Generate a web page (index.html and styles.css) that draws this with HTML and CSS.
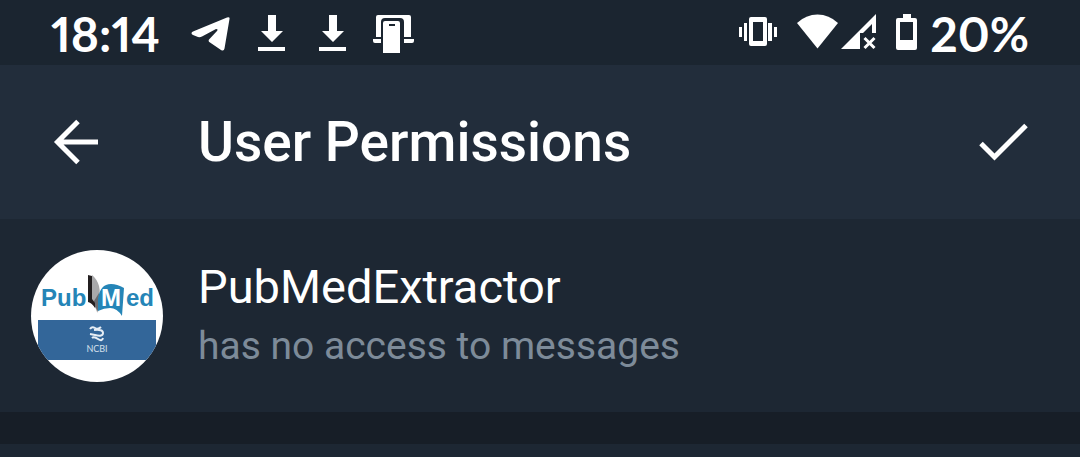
FILE: index.html
```html
<!DOCTYPE html>
<html lang="en">
<head>
<meta charset="utf-8">
<meta name="viewport" content="width=device-width, initial-scale=1">
<title>User Permissions</title>
<link rel="stylesheet" href="styles.css">
</head>
<body>
<div class="status">
  <div class="status-side status-left">
    <time class="status-text clock">18:14</time>
    <svg width="40" height="64" viewBox="191 0 40 64" aria-hidden="true"><path d="M193 31.500L227 17.500Q230 16.500 229.500 19L224.500 48.500Q224 51.500 221 50L210 42.500Q207.500 41 209.500 39L217 31Q218.500 29 216 29L202 36.500Q200 37.500 198 37L193 35Q190 33 193 31.500Z"/></svg>
    <svg width="41" height="64" viewBox="251 0 41 64" aria-hidden="true"><path d="M268 15h8v16h7l-11 11-11-11h7zM258 47h27v4h-27z"/></svg>
    <svg width="41" height="64" viewBox="251 0 41 64" aria-hidden="true"><path d="M268 15h8v16h7l-11 11-11-11h7zM258 47h27v4h-27z"/></svg>
    <svg width="42" height="64" viewBox="373 0 42 64" aria-hidden="true"><path d="M378 15h31q2 0 2 2v20h-7V22q0-4-4-4h-15q-4 0-4 4v15h-5V17q0-2 2-2z"/><path d="M373 39h8v4h-6q-2 0-2-2zM404 39h10v2q0 2-2 2h-8z"/><path fill-rule="evenodd" d="M385 21h13q2 0 2 2v30h-17V23q0-2 2-2zm4 3v2h6v-2z"/></svg>
  </div>
  <div class="status-side">
    <svg width="39" height="64" viewBox="738 0 39 64" aria-hidden="true"><path d="M739 27h3v10h-3zM744 23h3v18h-3zM768 23h4v18h-4zM774 27h3v10h-3z"/><path fill-rule="evenodd" d="M751 17h14q2 0 2 2v25q0 2-2 2h-14q-2 0-2-2V19q0-2 2-2zm2 5v19h10V22z"/></svg>
    <svg class="wifi" width="41" height="64" viewBox="797 0 41 64" aria-hidden="true"><path d="M797 23Q806 14.500 817.500 14.500T838 23L817.500 48.500z"/></svg>
    <svg width="36" height="64" viewBox="841 0 36 64" aria-hidden="true"><path d="M876 14v19h-4V24l-9 9h-3v16h-19z"/><path class="stroke-small" d="M864.500 38l10 10M874.500 38l-10 10"/></svg>
    <svg class="battery" width="22" height="64" viewBox="896 0 22 64" aria-hidden="true"><path fill-rule="evenodd" d="M903 14h8v4h4q2 0 2 2v28q0 2-2 2h-17q-2 0-2-2V20q0-2 2-2h5zm-3 4zv22h13V22h-13z"/></svg>
    <span class="status-text">20%</span>
  </div>
</div>
<header class="toolbar">
  <button class="icon-button" type="button" aria-label="Back">
    <svg width="48" height="48" viewBox="52 118 48 48" aria-hidden="true"><path class="stroke-large" d="M98 142H58M78 121.500L57.500 142 78 162.500"/></svg>
  </button>
  <h1 class="title">User Permissions</h1>
  <button class="icon-button" type="button" aria-label="Done">
    <svg width="52" height="48" viewBox="978 118 52 48" aria-hidden="true"><path class="stroke-large" d="M981 143.500L994.500 157 1026 125.500"/></svg>
  </button>
</header>
<main>
  <section class="user">
    <svg class="avatar" width="132" height="132" viewBox="31 250 132 132" role="img" aria-label="PubMed NCBI logo">
      <path fill="#fff" d="M31 250h132v132H31z"/>
      <path fill="#336699" d="M38 320h118v40H38z"/>
      <text class="logo-text" x="41" y="306">Pub</text>
      <text class="logo-text" x="126" y="306">ed</text>
      <path fill="#a9a9ab" d="M92 275q5 4 7 11t-1 23l-1 3q-1-5-5-9z"/>
      <path fill="#6c6c70" d="M94 301l5-8-1 20q-1-5-4-7z"/>
      <path fill="#231f20" d="M88 275l4 1v23l3 4v5q-3-5-7-6z"/>
      <path fill="#2585b7" d="M98 299q2-15 13-15 6 0 13 4l-2 28q-5-8-12-8-6 0-12 3z"/>
      <text class="logo-m" x="101" y="306">M</text>
      <path class="helix" d="M90 329q2-3 5-1t6-1M94 330q9-1 9 3t-8 2l-5-1M92 338q2-2 6 1t5-1"/>
      <text class="logo-ncbi" x="97" y="352">NCBI</text>
    </svg>
    <div class="user-info">
      <h2 class="name">PubMedExtractor</h2>
      <p class="access">has no access to messages</p>
    </div>
  </section>
  <div class="divider"></div>
</main>
</body>
</html>
```
FILE: styles.css
```css
* { box-sizing: border-box; }
body {
  margin: 0;
  background: #1d2733;
  color: #fff;
  font-family: Roboto, "Liberation Sans", sans-serif;
}
svg { display: block; flex: none; fill: #fff; }
h1, h2, p { margin: 0; font-weight: 400; }

.status {
  display: flex;
  justify-content: space-between;
  height: 65px;
  padding: 0 51px;
  background: #1b2530;
}
.status-side { display: flex; align-items: flex-start; }
.status-left { gap: 20px; }
.status-text {
  font: 700 48px/68px Lato, sans-serif;
  font-variant-numeric: proportional-nums;
}
.clock { margin-right: 11px; }
.wifi { margin: 0 3px 0 20px; }
.battery { margin: 0 12px 0 19px; }

.toolbar {
  display: flex;
  align-items: center;
  height: 154px;
  padding: 0 50px 0 52px;
  background: #222d3b;
}
.icon-button {
  padding: 0;
  border: 0;
  background: none;
  cursor: pointer;
}
.title {
  flex: 1;
  margin-left: 98px;
  font-size: 55px;
  line-height: 64px;
  font-weight: 500;
}
.stroke-large { fill: none; stroke: #fff; stroke-width: 5; }
.stroke-small { fill: none; stroke: #fff; stroke-width: 3; }

.user {
  display: flex;
  align-items: center;
  gap: 35px;
  height: 193px;
  padding: 0 31px;
}
.avatar { border-radius: 50%; }
.name { font-size: 47px; line-height: 60px; }
.access { color: #7d8b99; font-size: 39px; line-height: 58px; }
.logo-text { fill: #2585b7; font: 700 24px "Liberation Sans", sans-serif; }
.logo-m { fill: #fff; font: 700 24px "Liberation Sans", sans-serif; }
.logo-ncbi { fill: #d5e0ec; font: 9px Lato, sans-serif; text-anchor: middle; }
.helix { fill: none; stroke: #e7eef5; stroke-width: 2; }

.divider { height: 32px; background: #171e27; }
```
